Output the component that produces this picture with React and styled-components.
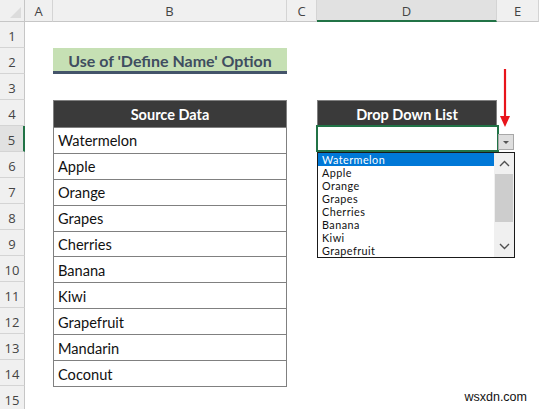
import React from "react";
import styled, { createGlobalStyle } from "styled-components";

const Global = createGlobalStyle`
  html, body { margin: 0; padding: 0; background: #ffffff; }
  body { width: 539px; height: 409px; overflow: hidden; font-family: Lato, "Open Sans", sans-serif; }
`;

const Sheet = styled.div`
  position: relative;
  width: 539px;
  height: 409px;
  display: grid;
  grid-template-columns: 25px 28px 234px 30px 180px 42px;
  grid-template-rows: 22px repeat(15, 26px);
  background: #ffffff;
`;

const Corner = styled.div`
  grid-column: 1;
  grid-row: 1;
  background: #f0f0f0;
  border-right: 1px solid #c6c6c6;
  border-bottom: 1px solid #c6c6c6;
  box-sizing: border-box;
  position: relative;
  &::after {
    content: "";
    position: absolute;
    right: 3px;
    bottom: 3px;
    width: 0;
    height: 0;
    border-left: 11px solid transparent;
    border-bottom: 11px solid #dcdcdc;
  }
`;

const ColHead = styled.div`
  grid-row: 1;
  grid-column: ${(p) => p.$col};
  box-sizing: border-box;
  background: ${(p) => (p.$active ? "#e1e1e1" : "#f0f0f0")};
  border-right: 1px solid #d4d4d4;
  border-bottom: ${(p) => (p.$active ? "2px solid #217346" : "1px solid #c6c6c6")};
  display: flex;
  align-items: center;
  justify-content: center;
  font-family: "Open Sans", "Noto Sans", sans-serif;
  font-size: 13px;
  color: #444444;
  padding-top: ${(p) => (p.$active ? "1px" : "0")};
`;

const RowHead = styled.div`
  grid-column: 1;
  grid-row: ${(p) => p.$row + 1};
  box-sizing: border-box;
  background: ${(p) => (p.$active ? "#e1e1e1" : "#f0f0f0")};
  border-right: ${(p) => (p.$active ? "2px solid #217346" : "1px solid #c6c6c6")};
  border-bottom: 1px solid #d4d4d4;
  display: flex;
  align-items: center;
  justify-content: center;
  font-family: "Open Sans", "Noto Sans", sans-serif;
  font-size: 13px;
  color: #444444;
  padding-top: 2px;
`;

const TitleCell = styled.div`
  grid-column: 3;
  grid-row: 3;
  box-sizing: border-box;
  background: #c6e0b4;
  border-bottom: 3px solid #44546a;
  display: flex;
  align-items: center;
  justify-content: center;
  font-weight: 700;
  font-size: 16px;
  color: #3f4d60;
  padding-top: 1px;
`;

const Table = styled.div`
  grid-column: ${(p) => p.$col};
  grid-row: ${(p) => p.$row} / span ${(p) => p.$span};
  box-sizing: border-box;
  border: 1px solid #808080;
  display: grid;
  grid-template-rows: repeat(${(p) => p.$span}, 1fr);
  margin: 0 0 -1px 0;
`;

const HeadCell = styled.div`
  background: #3a3a3a;
  color: #ffffff;
  font-weight: 700;
  font-size: 14.5px;
  display: flex;
  align-items: center;
  justify-content: center;
  padding-top: 1px;
`;

const DataCell = styled.div`
  box-sizing: border-box;
  border-top: 1px solid #808080;
  display: flex;
  align-items: center;
  padding: 1px 0 0 4px;
  font-size: 14.6px;
  color: #111111;
`;

const ActiveCell = styled.div`
  grid-column: 5;
  grid-row: 6;
  box-sizing: border-box;
  margin: -1px -2px 0 -1px;
  border: 2px solid #217346;
  position: relative;
`;

const DropButton = styled.div`
  position: absolute;
  left: 498px;
  top: 134px;
  width: 16px;
  height: 16px;
  box-sizing: border-box;
  background: #dedede;
  border: 1px solid #a8a8a8;
  display: flex;
  align-items: center;
  justify-content: center;
  &::after {
    content: "";
    width: 0;
    height: 0;
    border-left: 3.5px solid transparent;
    border-right: 3.5px solid transparent;
    border-top: 3.5px solid #555555;
  }
`;

const ListBox = styled.div`
  position: absolute;
  left: 317px;
  top: 152px;
  width: 198px;
  height: 106px;
  box-sizing: border-box;
  border: 1px solid #1a1a1a;
  background: #ffffff;
  display: grid;
  grid-template-columns: 1fr 20px;
`;

const Items = styled.div`
  display: flex;
  flex-direction: column;
`;

const Item = styled.div`
  height: 13px;
  line-height: 13px;
  font-size: 10.8px;
  letter-spacing: 0.45px;
  padding-left: 4px;
  color: ${(p) => (p.$selected ? "#ffffff" : "#111111")};
  background: ${(p) => (p.$selected ? "#0078d7" : "transparent")};
  white-space: nowrap;
  overflow: hidden;
`;

const ScrollBar = styled.div`
  background: #f0f0f0;
  display: grid;
  grid-template-rows: 21px 1fr 21px;
`;

const ScrollBtn = styled.div`
  display: flex;
  align-items: center;
  justify-content: center;
`;

const Track = styled.div`
  padding: 0 1px;
  display: flex;
  flex-direction: column;
`;

const Thumb = styled.div`
  height: 48px;
  background: #cdcdcd;
`;

const RedArrow = styled.svg`
  position: absolute;
  left: 499px;
  top: 69px;
`;

const Watermark = styled.div`
  position: absolute;
  right: 12px;
  bottom: 5px;
  font-family: "Liberation Sans", Arial, sans-serif;
  font-size: 12.5px;
  color: #111111;
`;

const source = [
  "Watermelon",
  "Apple",
  "Orange",
  "Grapes",
  "Cherries",
  "Banana",
  "Kiwi",
  "Grapefruit",
  "Mandarin",
  "Coconut",
];

const cols = ["A", "B", "C", "D", "E"];

const Chevron = ({ up }) => (
  <svg width="11" height="7" viewBox="0 0 11 7">
    <polyline
      points={up ? "1,6 5.5,1.5 10,6" : "1,1 5.5,5.5 10,1"}
      fill="none"
      stroke="#505050"
      strokeWidth="1.4"
    />
  </svg>
);

export default function App() {
  return (
    <>
      <Global />
      <Sheet>
        <Corner />
        {cols.map((c, i) => (
          <ColHead key={c} $col={i + 2} $active={c === "D"}>
            {c}
          </ColHead>
        ))}
        {Array.from({ length: 15 }, (_, i) => (
          <RowHead key={i} $row={i + 1} $active={i + 1 === 5}>
            {i + 1}
          </RowHead>
        ))}
        <TitleCell>Use of 'Define Name' Option</TitleCell>
        <Table $col={3} $row={5} $span={11}>
          <HeadCell>Source Data</HeadCell>
          {source.map((s) => (
            <DataCell key={s}>{s}</DataCell>
          ))}
        </Table>
        <Table $col={5} $row={5} $span={1}>
          <HeadCell>Drop Down List</HeadCell>
        </Table>
        <ActiveCell />
        <RedArrow width="12" height="60" viewBox="0 0 12 60">
          <line x1="6" y1="0" x2="6" y2="48" stroke="#e8141b" strokeWidth="2.2" />
          <polygon points="1,47 11,47 6,58" fill="#e8141b" />
        </RedArrow>
        <DropButton />
        <ListBox>
          <Items>
            {source.slice(0, 8).map((s, i) => (
              <Item key={s} $selected={i === 0}>
                {s}
              </Item>
            ))}
          </Items>
          <ScrollBar>
            <ScrollBtn>
              <Chevron up />
            </ScrollBtn>
            <Track>
              <Thumb />
            </Track>
            <ScrollBtn>
              <Chevron />
            </ScrollBtn>
          </ScrollBar>
        </ListBox>
        <Watermark>wsxdn.com</Watermark>
      </Sheet>
    </>
  );
}
